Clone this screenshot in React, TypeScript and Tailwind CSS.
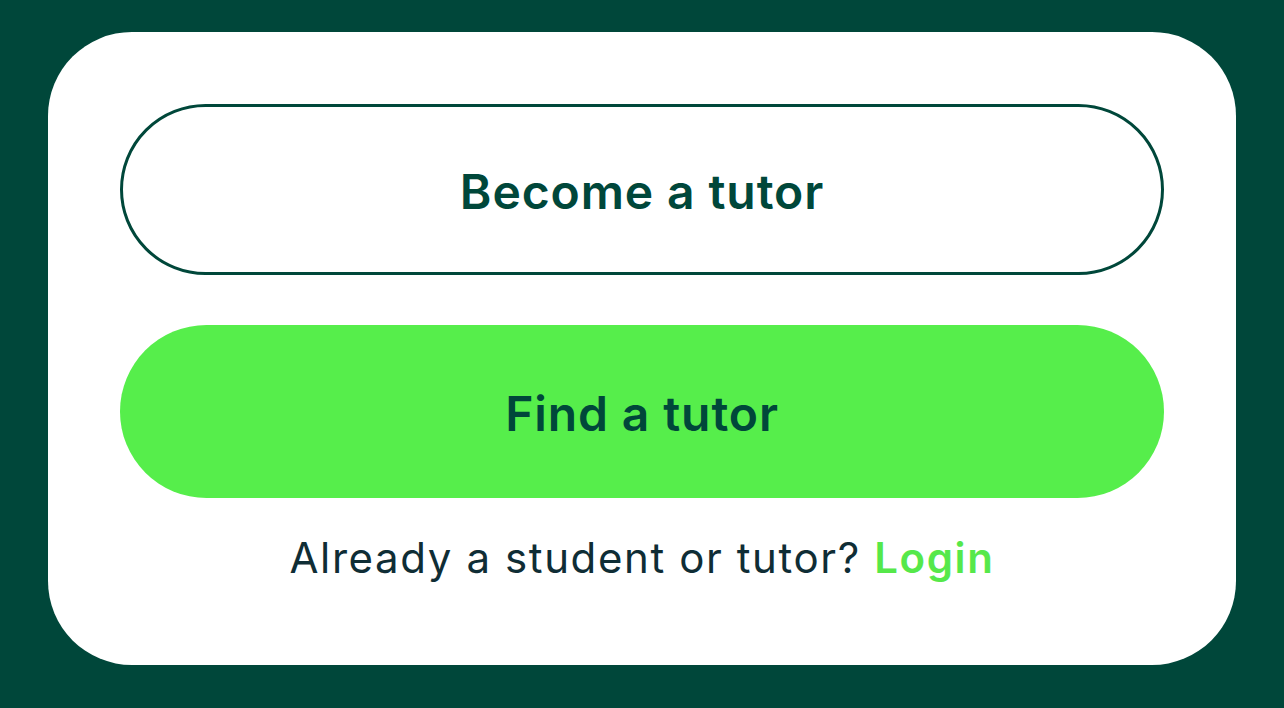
export default function App() {
  return (
    <div
      className="flex h-[708px] w-full justify-center bg-[#00473a] px-[48px] pt-[32px]"
      style={{ fontFamily: "Inter, 'Noto Sans', sans-serif" }}
    >
      <div className="flex h-[633px] w-full flex-col items-stretch rounded-[84px] bg-white px-[72px] pt-[72px]">
        {/* Outlined action */}
        <button className="flex h-[171px] w-full items-center justify-center rounded-full border-[3px] border-[#00473a] pt-[4px] text-[48px] font-semibold tracking-[0.9px] text-[#00473a]">
          Become a tutor
        </button>

        {/* Primary action */}
        <button className="mt-[50px] flex h-[173px] w-full items-center justify-center rounded-full bg-[#56ee4b] pt-[4px] text-[48px] font-semibold tracking-[0.9px] text-[#00473a]">
          Find a tutor
        </button>

        <p className="mt-[36px] text-center text-[42px] leading-[48px] tracking-[1.6px] text-[#0f2d35]">
          Already a student or tutor?{" "}
          <a href="#" className="font-semibold text-[#56e84a]">
            Login
          </a>
        </p>
      </div>
    </div>
  );
}
